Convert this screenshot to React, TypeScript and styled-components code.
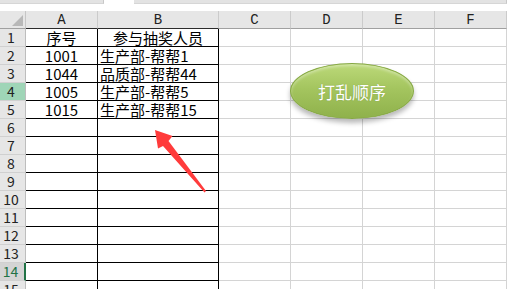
import { createGlobalStyle, styled } from "styled-components"

const GlobalStyle = createGlobalStyle`
  html, body {
    margin: 0;
    padding: 0;
    background: #ffffff;
  }
`

const COLS = [26, 72, 121, 72, 72, 72, 72]
const LETTERS = ["A", "B", "C", "D", "E", "F"]

const rows: { n: number; a?: string; b?: string; left?: boolean }[] = [
  { n: 1, a: "序号", b: "参与抽奖人员" },
  { n: 2, a: "1001", b: "生产部-帮帮1", left: true },
  { n: 3, a: "1044", b: "品质部-帮帮44", left: true },
  { n: 4, a: "1005", b: "生产部-帮帮5", left: true },
  { n: 5, a: "1015", b: "生产部-帮帮15", left: true },
  ...Array.from({ length: 10 }, (_, i) => ({ n: i + 6 })),
]

const Page = styled.div`
  position: relative;
  width: 507px;
  height: 289px;
  overflow: hidden;
  font-family: "Noto Sans CJK SC", "Noto Sans", sans-serif;
`

const TopStrip = styled.div`
  display: flex;
  height: 11px;
  background: #ffffff;
`

const StripBox = styled.div<{ $w: string }>`
  width: ${(p) => p.$w};
  height: 4px;
  background: #e3e3e3;
  border-bottom: 1px solid #d6d6d6;
  border-right: 1px solid #c8c8c8;
  box-sizing: border-box;
`

const StripGap = styled.div`
  width: 30px;
`

const Sheet = styled.div`
  display: grid;
  grid-template-columns: ${COLS.map((c) => c + "px").join(" ")};
  grid-auto-rows: 18px;
`

const Corner = styled.div`
  position: relative;
  background: #e6e6e6;
  border-right: 1px solid #c6c6c6;
  border-bottom: 1px solid #a0a0a0;
  box-sizing: border-box;
`

const CornerTri = styled.div`
  position: absolute;
  right: 2px;
  bottom: 2px;
  width: 0;
  height: 0;
  border-left: 11px solid transparent;
  border-bottom: 11px solid #b8b8b8;
`

const ColHead = styled.div<{ $framed: boolean }>`
  display: flex;
  align-items: center;
  justify-content: center;
  background: #e6e6e6;
  border-right: 1px solid #cbcbcb;
  border-bottom: 1px solid ${(p) => (p.$framed ? "#2b2b2b" : "#a0a0a0")};
  box-sizing: border-box;
  font-family: "Liberation Mono", monospace;
  font-size: 14px;
  line-height: 15px;
  color: #222222;
  padding-top: 1px;
`

const RowHead = styled.div<{ $state?: "row" | "cell" }>`
  display: flex;
  align-items: center;
  justify-content: center;
  padding-right: 3px;
  background: ${(p) =>
    p.$state === "row" ? "#9fd5b7" : p.$state === "cell" ? "#d4d4d4" : "#e6e6e6"};
  border-right: ${(p) => (p.$state === "cell" ? "2px solid #217346" : "1px solid #bdbdbd")};
  border-bottom: 1px solid #d0d0d0;
  box-sizing: border-box;
  font-size: 14px;
  line-height: 15px;
  color: ${(p) => (p.$state === "cell" ? "#217346" : "#222222")};
`

const Cell = styled.div<{ $framed: boolean; $align?: "left" | "center" }>`
  display: flex;
  align-items: center;
  justify-content: ${(p) => (p.$align === "left" ? "flex-start" : "center")};
  padding-left: ${(p) => (p.$align === "left" ? "2px" : "0")};
  border-right: 1px solid ${(p) => (p.$framed ? "#000000" : "#d4d4d4")};
  border-bottom: 1px solid ${(p) => (p.$framed ? "#000000" : "#d4d4d4")};
  box-sizing: border-box;
  font-size: 15px;
  line-height: 16px;
  color: #000000;
  white-space: nowrap;
`

const ShuffleButton = styled.div`
  position: absolute;
  left: 290px;
  top: 63px;
  width: 124px;
  height: 56px;
  border-radius: 50%;
  box-sizing: border-box;
  display: flex;
  align-items: center;
  justify-content: center;
  background: linear-gradient(to bottom, #bcd979 0%, #a4c55f 45%, #8fb14b 100%);
  border: 1px solid #86a844;
  box-shadow: 0 4px 5px rgba(0, 0, 0, 0.28), inset 0 2px 3px rgba(255, 255, 255, 0.35);
  color: #ffffff;
  font-size: 17px;
  line-height: 20px;
  text-shadow: 0 0 1px rgba(80, 100, 40, 0.4);
  padding-top: 2px;
`

const Overlay = styled.svg`
  position: absolute;
  left: 0;
  top: 0;
  pointer-events: none;
`

export default function App() {
  return (
    <Page>
      <GlobalStyle />
      <TopStrip>
        <StripBox $w="104px" />
        <StripGap />
        <StripBox $w="373px" />
      </TopStrip>
      <Sheet>
        <Corner>
          <CornerTri />
        </Corner>
        {LETTERS.map((l, i) => (
          <ColHead key={l} $framed={i < 2}>
            {l}
          </ColHead>
        ))}
        {rows.map((r) => (
          <Row key={r.n} {...r} />
        ))}
      </Sheet>
      <ShuffleButton>打乱顺序</ShuffleButton>
      <Overlay width="507" height="289" viewBox="0 0 507 289">
        <polygon
          points="155,130 172.5,136 168.5,141 206,191 204.5,192.5 163,146 158,148.5"
          fill="#ff3b3b"
        />
      </Overlay>
    </Page>
  )
}

function Row({ n, a, b, left }: { n: number; a?: string; b?: string; left?: boolean }) {
  const state = n === 4 ? "row" : n === 14 ? "cell" : undefined
  return (
    <>
      <RowHead $state={state}>{n}</RowHead>
      <Cell $framed>{a}</Cell>
      <Cell $framed $align={left ? "left" : "center"}>
        {b}
      </Cell>
      {[0, 1, 2, 3].map((k) => (
        <Cell key={k} $framed={false} />
      ))}
    </>
  )
}
